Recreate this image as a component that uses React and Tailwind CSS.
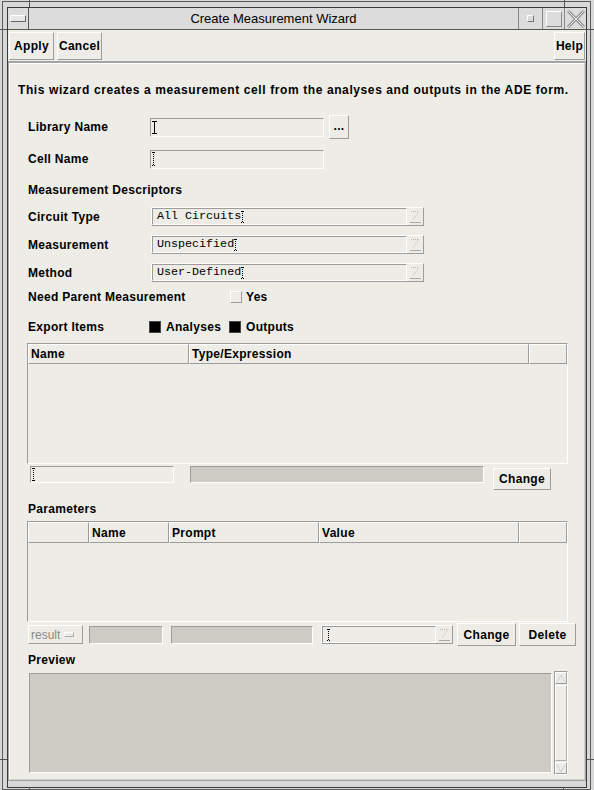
import React from 'react';

const sans = "font-['Liberation_Sans',Arial,sans-serif]";
const mono = "font-['Liberation_Mono','Courier_New',monospace]";

const sunken = 'border border-t-[#9c9c9c] border-l-[#9c9c9c] border-r-white border-b-white';
const raised = 'border border-t-white border-l-white border-r-[#9c9c9c] border-b-[#9c9c9c]';
const bold = 'font-bold text-[12px] leading-none tracking-[0.3px] text-black';

const Btn = ({ children, className = '' }) => (
  <div className={`${raised} flex items-center justify-center ${bold} shrink-0 ${className}`}>
    {children}
  </div>
);

const Label = ({ children, className = 'w-[122px]' }) => (
  <div className={`${bold} shrink-0 ${className}`}>{children}</div>
);

const DotCursor = ({ h = 14 }) => (
  <svg width="4" height={h} className="shrink-0">
    <line x1="1.5" y1="0" x2="1.5" y2={h} stroke="#000" strokeDasharray="1 1" />
    <rect x="0" y="0" width="1" height="1" fill="#000" />
    <rect x="2" y="0" width="1" height="1" fill="#000" />
    <rect x="0" y={h - 1} width="1" height="1" fill="#000" />
    <rect x="2" y={h - 1} width="1" height="1" fill="#000" />
  </svg>
);

const IBeam = () => (
  <svg width="5" height="13" className="shrink-0">
    <line x1="2.5" y1="0" x2="2.5" y2="13" stroke="#000" />
    <line x1="0" y1="0.5" x2="5" y2="0.5" stroke="#000" />
    <line x1="0" y1="12.5" x2="5" y2="12.5" stroke="#000" />
  </svg>
);

const DropGlyph = () => (
  <svg width="11" height="13" className="shrink-0">
    <polyline points="1,1.5 9,1.5 3,10" fill="none" stroke="#b8b8b8" strokeDasharray="1 1" />
    <line x1="0" y1="12.5" x2="11" y2="12.5" stroke="#a8a8a8" />
  </svg>
);

const Combo = ({ text, className = 'w-[273px]', field = 'w-[255px]' }) => (
  <div className={`${raised} h-[19px] flex shrink-0 ${className}`}>
    <div className={`${sunken} ${field} h-full flex items-center pl-[4px] ${mono} text-[11.7px] leading-none text-black`}>
      {text}
      <DotCursor h={12} />
    </div>
    <div className="flex-1 flex items-center justify-center">
      <DropGlyph />
    </div>
  </div>
);

const HeadCell = ({ children, className }) => (
  <div className={`${raised} h-full flex items-center pl-[2px] ${bold} shrink-0 ${className}`}>
    {children}
  </div>
);

const Arrow = ({ up }) => (
  <svg width="10" height="9">
    <polyline
      points={up ? '1,8 5,1 9,8' : '1,1 5,8 9,1'}
      fill="none"
      stroke="#b5b5b5"
      strokeDasharray="1 1"
    />
  </svg>
);

export default function App() {
  return (
    <div className={`w-[594px] h-[790px] bg-[#d8d8d8] relative overflow-hidden ${sans}`}>
      {/* frame corner ticks */}
      <div className="absolute left-[29px] top-0 w-px h-[7px] bg-[#555]" />
      <div className="absolute left-[564px] top-0 w-px h-[7px] bg-[#555]" />
      <div className="absolute left-0 top-[29px] w-[7px] h-px bg-[#555]" />
      <div className="absolute right-0 top-[29px] w-[7px] h-px bg-[#555]" />
      <div className="absolute left-0 top-[759px] w-[7px] h-px bg-[#555]" />
      <div className="absolute right-0 top-[759px] w-[7px] h-px bg-[#555]" />
      <div className="absolute left-[29px] bottom-0 w-px h-[3px] bg-[#555]" />
      <div className="absolute left-[563px] bottom-0 w-px h-[3px] bg-[#555]" />

      <div className="ml-[2px] mt-[1px] w-[589px] h-[789px] border border-[#5a5a5a] px-[4px] pt-[5px] overflow-hidden">
        <div className="w-[580px] h-[781px] border border-[#3a3a3a] bg-[#d8d8d8] flex flex-col">
          {/* title bar */}
          <div className="h-[22px] flex border-b border-[#555] bg-[#dcdcdc] shrink-0">
            <div className="w-[21px] border-r border-[#555] flex items-center justify-center">
              <div className="w-[16px] h-[7px] border border-[#666] bg-[#e6e6e6] border-t-white border-l-white" />
            </div>
            <div className="flex-1 flex items-center justify-center text-[13px] text-black leading-none">
              Create Measurement Wizard
            </div>
            <div className="w-[24px] border-l border-[#888] flex items-center justify-center">
              <div className="w-[7px] h-[7px] border border-[#777] border-t-white border-l-white" />
            </div>
            <div className="w-[22px] border-l border-[#888] flex items-center justify-center">
              <div className="w-[16px] h-[16px] border border-[#888] border-t-white border-l-white" />
            </div>
            <div className="w-[22px] border-l border-[#888] flex items-center justify-center">
              <svg width="18" height="18">
                <line x1="1" y1="1" x2="17" y2="17" stroke="#8c8c8c" strokeWidth="3" />
                <line x1="17" y1="1" x2="1" y2="17" stroke="#8c8c8c" strokeWidth="3" />
                <line x1="1" y1="1" x2="17" y2="17" stroke="#efefef" strokeWidth="1" />
                <line x1="17" y1="1" x2="1" y2="17" stroke="#efefef" strokeWidth="1" />
              </svg>
            </div>
          </div>

          {/* toolbar */}
          <div className="h-[32px] flex items-start pt-[2px] px-[1px] bg-[#edece6] border-b border-[#a5a5a5] shrink-0">
            <Btn className="w-[45px] h-[28px]">Apply</Btn>
            <Btn className="w-[45px] h-[28px] ml-[3px]">Cancel</Btn>
            <div className="flex-1" />
            <Btn className="w-[31px] h-[28px]">Help</Btn>
          </div>

          {/* main panel */}
          <div className="h-[719px] bg-[#edece6] border border-[#a3a3a3] shrink-0">
            <div className="h-full border border-white border-r-[#d0d0d0] border-b-[#d0d0d0] pl-[8px] flex flex-col">
              <div className="mt-[18px] h-[16px] flex items-center font-bold text-[12px] leading-none tracking-[0.6px] text-black whitespace-nowrap">
                This wizard creates a measurement cell from the analyses and outputs in the ADE form.
              </div>

              <div className="mt-[17px] h-[24px] flex items-center ml-[10px]">
                <Label>Library Name</Label>
                <div className={`${sunken} w-[174px] h-[19px] flex items-center pl-[1px]`}>
                  <IBeam />
                </div>
                <Btn className="w-[20px] h-[24px] ml-[5px] pb-[3px]">...</Btn>
              </div>

              <div className="mt-[10px] h-[20px] flex items-center ml-[10px]">
                <Label>Cell Name</Label>
                <div className={`${sunken} w-[174px] h-[19px] flex items-center pl-[1px]`}>
                  <DotCursor h={14} />
                </div>
              </div>

              <div className="mt-[13px] h-[16px] flex items-center ml-[10px]">
                <Label className="">Measurement Descriptors</Label>
              </div>

              <div className="mt-[9px] h-[19px] flex items-center ml-[10px]">
                <Label className="w-[123px]">Circuit Type</Label>
                <Combo text="All Circuits" />
              </div>
              <div className="mt-[9px] h-[19px] flex items-center ml-[10px]">
                <Label className="w-[123px]">Measurement</Label>
                <Combo text="Unspecified" />
              </div>
              <div className="mt-[9px] h-[19px] flex items-center ml-[10px]">
                <Label className="w-[123px]">Method</Label>
                <Combo text="User-Defined" />
              </div>

              <div className="mt-[7px] h-[16px] flex items-center ml-[10px]">
                <Label className="w-[202px]">Need Parent Measurement</Label>
                <div className={`${raised} w-[12px] h-[12px] bg-[#edece6]`} />
                <span className={`ml-[4px] ${bold}`}>Yes</span>
              </div>

              <div className="mt-[14px] h-[16px] flex items-center ml-[10px]">
                <Label className="w-[121px]">Export Items</Label>
                <div className="w-[12px] h-[12px] bg-black border border-[#444] shrink-0" />
                <span className={`ml-[5px] w-[63px] ${bold}`}>Analyses</span>
                <div className="w-[12px] h-[12px] bg-black border border-[#444] shrink-0" />
                <span className={`ml-[5px] ${bold}`}>Outputs</span>
              </div>

              {/* export items table */}
              <div className={`mt-[8px] ml-[9px] w-[541px] h-[121px] ${sunken} flex flex-col shrink-0`}>
                <div className="h-[20px] flex">
                  <HeadCell className="w-[161px]">Name</HeadCell>
                  <HeadCell className="w-[340px]">Type/Expression</HeadCell>
                  <HeadCell className="w-[38px]" />
                </div>
              </div>

              <div className="mt-[2px] h-[24px] flex items-start ml-[12px]">
                <div className={`${sunken} w-[144px] h-[17px] flex items-center pl-[1px]`}>
                  <DotCursor h={13} />
                </div>
                <div className={`${sunken} w-[294px] h-[17px] ml-[16px] bg-[#cccbc4]`} />
                <Btn className="w-[58px] h-[22px] ml-[9px] mt-[2px]">Change</Btn>
              </div>

              <div className="mt-[11px] h-[16px] flex items-center ml-[10px]">
                <Label className="">Parameters</Label>
              </div>

              {/* parameters table */}
              <div className={`mt-[4px] ml-[9px] w-[541px] h-[101px] ${sunken} flex flex-col shrink-0`}>
                <div className="h-[21px] flex">
                  <HeadCell className="w-[61px]" />
                  <HeadCell className="w-[80px]">Name</HeadCell>
                  <HeadCell className="w-[150px]">Prompt</HeadCell>
                  <HeadCell className="w-[200px]">Value</HeadCell>
                  <HeadCell className="w-[48px]" />
                </div>
              </div>

              <div className="mt-[1px] h-[23px] flex items-center ml-[10px]">
                <div className={`${raised} w-[55px] h-[19px] flex items-center pl-[2px] text-[12px] leading-none text-[#8a8a8a] shrink-0`}>
                  result
                  <div className="ml-[4px] w-[10px] h-[5px] border border-[#aaa] border-t-white border-l-white" />
                </div>
                <div className={`${sunken} w-[74px] h-[18px] ml-[6px] bg-[#cccbc4] shrink-0`} />
                <div className={`${sunken} w-[142px] h-[18px] ml-[8px] bg-[#cccbc4] shrink-0`} />
                <Combo text="" className="w-[132px] ml-[8px]" field="w-[114px]" />
                <Btn className="w-[59px] h-[23px] ml-[4px]">Change</Btn>
                <Btn className="w-[57px] h-[23px] ml-[3px]">Delete</Btn>
              </div>

              <div className="mt-[6px] h-[16px] flex items-center ml-[10px]">
                <Label className="">Preview</Label>
              </div>

              <div className="mt-[3px] h-[104px] flex items-start ml-[11px]">
                <div className={`${sunken} w-[523px] h-[100px] mt-[2px] bg-[#cccbc4] shrink-0`} />
                <div className="w-[14px] h-[104px] ml-[2px] border border-[#9c9c9c] border-r-white border-b-white flex flex-col shrink-0">
                  <div className={`${raised} h-[12px] flex items-center justify-center`}>
                    <Arrow up />
                  </div>
                  <div className="flex-1 my-[1px] border border-[#b0b0b0] border-t-white border-l-white" />
                  <div className={`${raised} h-[12px] flex items-center justify-center`}>
                    <Arrow />
                  </div>
                </div>
              </div>
            </div>
          </div>
        </div>
      </div>
    </div>
  );
}
